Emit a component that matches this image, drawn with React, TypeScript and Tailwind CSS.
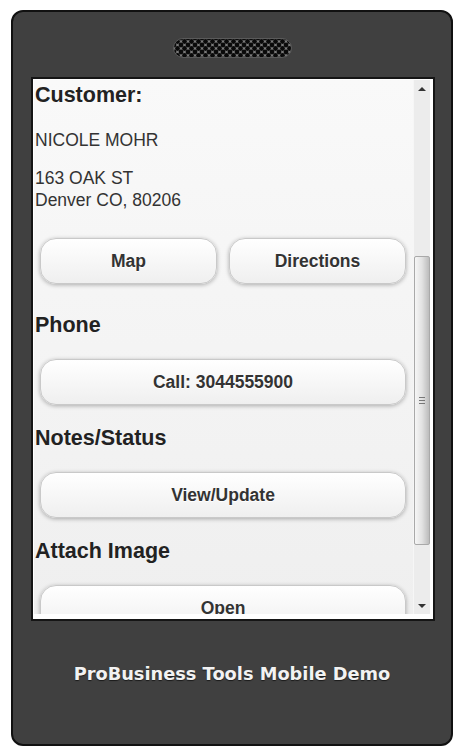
import React from "react";

const Speaker = () => (
  <svg width="119" height="20" viewBox="0 0 119 20">
    <defs>
      <pattern id="grill" width="7" height="7" patternUnits="userSpaceOnUse" x="1" y="0">
        <rect width="7" height="7" fill="#7a7a7a" />
        <circle cx="3.5" cy="3.5" r="2.4" fill="#0a0a0a" />
        <circle cx="0" cy="0" r="2.4" fill="#0a0a0a" />
        <circle cx="7" cy="0" r="2.4" fill="#0a0a0a" />
        <circle cx="0" cy="7" r="2.4" fill="#0a0a0a" />
        <circle cx="7" cy="7" r="2.4" fill="#0a0a0a" />
      </pattern>
    </defs>
    <rect x="0.5" y="0.5" width="118" height="19" rx="9.5" fill="url(#grill)" stroke="#5a5a5a" />
  </svg>
);

const Button = ({ label }: { label: string }) => (
  <div className="h-[46px] flex items-center justify-center rounded-[16px] border border-[#c9c9c9] bg-linear-to-b from-[#ffffff] to-[#efefef] shadow-[0_1px_4px_rgba(0,0,0,0.3)] text-[17.5px] font-bold text-[#333] [text-shadow:0_1px_0_#fff]">
    {label}
  </div>
);

const Heading = ({ children, className }: { children: React.ReactNode; className?: string }) => (
  <h3 className={"text-[21.5px] leading-[26px] font-bold text-[#222] " + (className ?? "")}>{children}</h3>
);

const Scrollbar = () => (
  <div className="w-[17px] flex flex-col bg-[#ececec] border-l border-[#f6f6f6]">
    <div className="h-[17px] flex items-center justify-center">
      <div className="w-0 h-0 border-l-[4px] border-r-[4px] border-b-[4px] border-l-transparent border-r-transparent border-b-[#333]" />
    </div>
    <div className="flex-1">
      <div className="mt-[159px] h-[289px] rounded-[2px] border border-[#a9a9a9] bg-linear-to-r from-[#f6f6f6] via-[#e2e2e2] to-[#bcbcbc] flex flex-col items-center justify-center gap-[2px]">
        <div className="w-[6px] h-px bg-[#777]" />
        <div className="w-[6px] h-px bg-[#777]" />
        <div className="w-[6px] h-px bg-[#777]" />
      </div>
    </div>
    <div className="h-[17px] flex items-center justify-center">
      <div className="w-0 h-0 border-l-[4px] border-r-[4px] border-t-[4px] border-l-transparent border-r-transparent border-t-[#333]" />
    </div>
  </div>
);

export default function App() {
  return (
    <div className="w-[471px] h-[754px] bg-white pt-[10px] pl-[11px] font-['Liberation_Sans',Arial,sans-serif]">
      <div className="w-[442px] h-[736px] rounded-[12px] border-2 border-[#111] bg-[#404040] flex flex-col">
        {/* speaker grill */}
        <div className="mt-[26px] flex justify-center">
          <Speaker />
        </div>

        {/* screen */}
        <div className="mt-[19px] ml-[18px] w-[404px] h-[544px] border-2 border-[#151515] bg-white pt-px pl-px pr-[3px] pb-[5px] flex">
          <div className="flex-1 overflow-hidden bg-linear-to-b from-[#f9f9f9] to-[#efefef] text-[#333]">
            <Heading className="mt-[2px] pl-px">Customer:</Heading>
            <p className="mt-[21px] pl-px text-[17.5px] leading-[22px]">NICOLE MOHR</p>
            <p className="mt-[16px] pl-px text-[17.5px] leading-[22px]">
              163 OAK ST
              <br />
              Denver CO, 80206
            </p>
            <div className="mt-[27px] ml-[6px] mr-[7px] grid grid-cols-2 gap-[12px]">
              <Button label="Map" />
              <Button label="Directions" />
            </div>

            <Heading className="mt-[28px] pl-px">Phone</Heading>
            <div className="mt-[21px] ml-[6px] mr-[7px]">
              <Button label="Call: 3044555900" />
            </div>

            <Heading className="mt-[20px] pl-px">Notes/Status</Heading>
            <div className="mt-[21px] ml-[6px] mr-[7px]">
              <Button label="View/Update" />
            </div>

            <Heading className="mt-[20px] pl-px">Attach Image</Heading>
            <div className="mt-[21px] ml-[6px] mr-[7px]">
              <Button label="Open" />
            </div>
          </div>
          <Scrollbar />
        </div>

        {/* footer caption */}
        <p className="mt-[42px] text-center text-[17.8px] leading-[22px] font-bold text-[#f2f2f2] font-['DejaVu_Sans',Verdana,sans-serif] [text-shadow:0_1px_1px_rgba(0,0,0,0.6)]">
          ProBusiness Tools Mobile Demo
        </p>
      </div>
    </div>
  );
}
